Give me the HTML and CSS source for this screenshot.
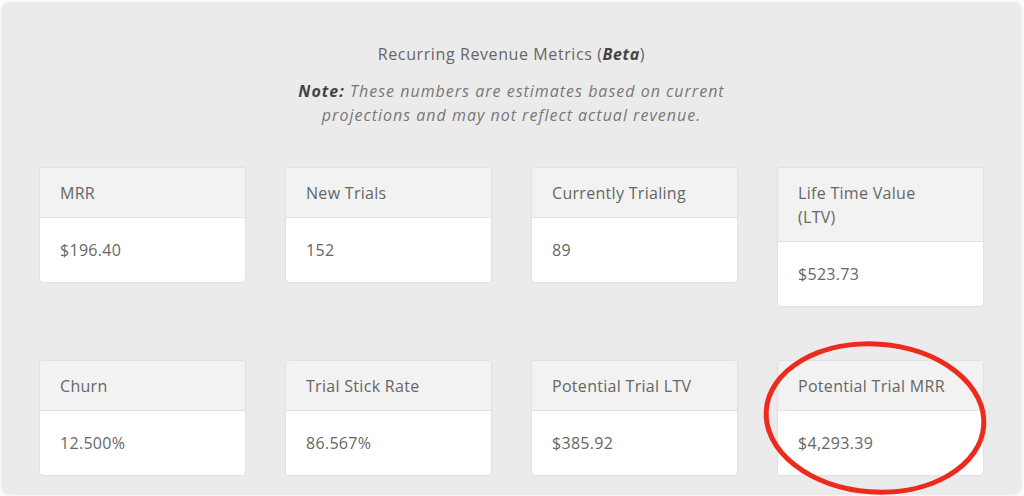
FILE: index.html
```html
<!DOCTYPE html>
<html>
<head>
<meta charset="utf-8">
<link rel="stylesheet" href="styles.css">
</head>
<body>
<div class="panel">
  <h2 class="title">Recurring Revenue Metrics (<b><i>Beta</i></b>)</h2>
  <p class="note"><b>Note:</b> These numbers are estimates based on current<br>projections and may not reflect actual revenue.</p>
  <div class="grid">
    <div class="card"><div class="card-head">MRR</div><div class="card-body">$196.40</div></div>
    <div class="card"><div class="card-head">New Trials</div><div class="card-body">152</div></div>
    <div class="card"><div class="card-head">Currently Trialing</div><div class="card-body">89</div></div>
    <div class="card"><div class="card-head">Life Time Value (LTV)</div><div class="card-body">$523.73</div></div>
    <div class="card"><div class="card-head">Churn</div><div class="card-body">12.500%</div></div>
    <div class="card"><div class="card-head">Trial Stick Rate</div><div class="card-body">86.567%</div></div>
    <div class="card"><div class="card-head">Potential Trial LTV</div><div class="card-body">$385.92</div></div>
    <div class="card"><div class="card-head">Potential Trial MRR</div><div class="card-body">$4,293.39</div></div>
  </div>
  <svg class="circle" width="240" height="170" viewBox="0 0 240 170">
    <ellipse cx="120" cy="85" rx="109" ry="74" fill="none" stroke="#ec2a1e" stroke-width="5" transform="rotate(4 120 85)"/>
  </svg>
</div>
</body>
</html>
```
FILE: styles.css
```css
html, body {
  margin: 0;
  padding: 0;
  background: #fbfbfb;
}
body {
  width: 1024px;
  height: 496px;
  overflow: hidden;
  font-family: "Open Sans", Lato, sans-serif;
  color: #666;
}
.panel {
  position: relative;
  margin: 4px 4px 0 3px;
  height: 489px;
  box-sizing: border-box;
  background: #ecebeb;
  border-radius: 6px;
  box-shadow: 0 0 4px rgba(0,0,0,0.18);
  padding: 38px 37px 0 37px;
}
.title {
  margin: 0;
  text-align: center;
  font-size: 16px;
  line-height: 24px;
  letter-spacing: 0.6px;
  font-weight: normal;
  color: #666;
}
.title b {
  color: #444;
}
.note {
  margin: 13px 0 0;
  text-align: center;
  font-size: 16px;
  line-height: 24px;
  letter-spacing: 1px;
  font-style: italic;
  color: #777;
}
.note b {
  color: #444;
}
.grid {
  margin-top: 41px;
  display: grid;
  grid-template-columns: repeat(4, 1fr);
  column-gap: 41px;
  row-gap: 55px;
  align-items: start;
}
.card {
  background: #fff;
  border-radius: 3px;
  box-shadow: 0 0 2px rgba(0,0,0,0.15);
  overflow: hidden;
  font-size: 16px;
  line-height: 24px;
  letter-spacing: 0.3px;
  color: #666;
}
.card-head {
  background: #f2f2f2;
  padding: 13px 30px 12px 20px;
  border-bottom: 1px solid #e2e2e2;
}
.card-body {
  padding: 20px;
}
.circle {
  position: absolute;
  left: 752px;
  top: 329px;
}
```
